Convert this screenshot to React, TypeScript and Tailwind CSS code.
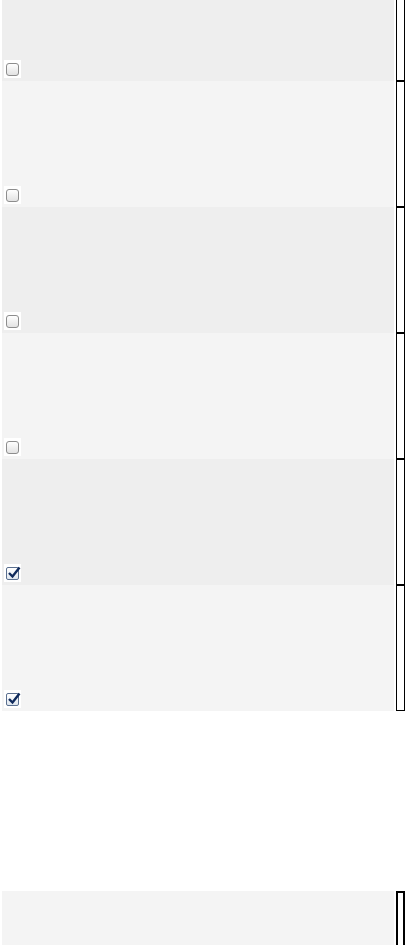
import React from 'react';

const ROWS = [
  { bg: 'bg-[#eeeeee]', checked: false },
  { bg: 'bg-[#f4f4f4]', checked: false },
  { bg: 'bg-[#eeeeee]', checked: false },
  { bg: 'bg-[#f4f4f4]', checked: false },
  { bg: 'bg-[#eeeeee]', checked: true },
  { bg: 'bg-[#f4f4f4]', checked: true },
];

function Check({ checked }: { checked: boolean }) {
  return (
    <div className="flex h-[18px] w-[17px] items-center justify-center bg-white">
      {checked ? (
        <div className="relative h-[13px] w-[13px] rounded-[2px] border border-[#5a6f8f] bg-gradient-to-b from-[#ffffff] to-[#dfe6ee]">
          <svg viewBox="0 0 14 14" className="absolute -top-[2px] left-[0px] h-[14px] w-[14px]">
            <path d="M2 7 L5.5 10.5 L12.5 1.5" fill="none" stroke="#0f2a5c" strokeWidth="2.4" strokeLinejoin="miter" />
          </svg>
        </div>
      ) : (
        <div className="h-[13px] w-[13px] rounded-[3px] border border-[#8d8d8d] bg-gradient-to-b from-[#ffffff] to-[#e2e2e2]" />
      )}
    </div>
  );
}

function Row({ bg, checked }: { bg: string; checked: boolean }) {
  return (
    <div className="flex h-[126px]">
      <div className={`flex w-[392px] flex-col justify-end pb-[3px] pl-[2px] ${bg}`}>
        <Check checked={checked} />
      </div>
      <div className="ml-[2px] w-[9px] border border-black" />
    </div>
  );
}

export default function App() {
  return (
    <div className="h-[945px] overflow-hidden bg-white pl-[2px]">
      <div className="-mt-[45px]">
        {ROWS.map((r, i) => (
          <Row key={i} bg={r.bg} checked={r.checked} />
        ))}
      </div>
      <div className="h-[180px]" />
      <div className="flex h-[126px]">
        <div className="w-[392px] bg-[#f4f4f4]" />
        <div className="ml-[2px] w-[9px] border-2 border-black" />
      </div>
    </div>
  );
}
